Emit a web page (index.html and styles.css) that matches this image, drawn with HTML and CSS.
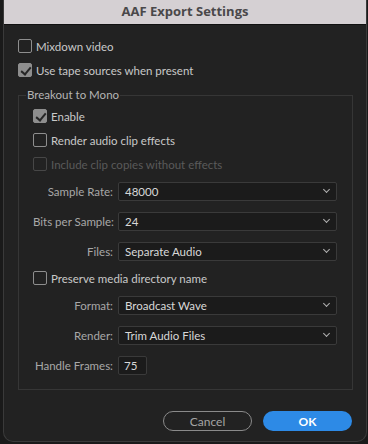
FILE: index.html
```html
<!DOCTYPE html>
<html lang="en">

<head>
    <meta charset="UTF-8">
    <title>AAF Export Settings</title>
    <link rel="stylesheet" href="styles.css">
</head>

<body>
    <div class="window">
        <div class="titlebar">AAF Export Settings</div>

        <div class="content">
            <label class="check"><span class="box"></span>Mixdown video</label>
            <label class="check"><span class="box on"></span>Use tape sources when present</label>

            <fieldset class="group">
                <legend>Breakout to Mono</legend>

                <label class="check"><span class="box on"></span>Enable</label>
                <label class="check"><span class="box"></span>Render audio clip effects</label>
                <label class="check disabled"><span class="box"></span>Include clip copies without effects</label>

                <div class="field">
                    <span class="name">Sample Rate:</span>
                    <div class="select">48000</div>
                </div>
                <div class="field">
                    <span class="name">Bits per Sample:</span>
                    <div class="select">24</div>
                </div>
                <div class="field">
                    <span class="name">Files:</span>
                    <div class="select">Separate Audio</div>
                </div>

                <label class="check"><span class="box"></span>Preserve media directory name</label>

                <div class="field">
                    <span class="name">Format:</span>
                    <div class="select">Broadcast Wave</div>
                </div>
                <div class="field">
                    <span class="name">Render:</span>
                    <div class="select">Trim Audio Files</div>
                </div>
                <div class="field">
                    <span class="name">Handle Frames:</span>
                    <div class="num">75</div>
                </div>
            </fieldset>

            <div class="buttons">
                <button class="btn cancel">Cancel</button>
                <button class="btn ok">OK</button>
            </div>
        </div>
    </div>
</body>

</html>
```

FILE: styles.css
```css
* {
    margin: 0;
    padding: 0;
    box-sizing: border-box;
}

body {
    background-color: #1a1a1a;
    font-family: Lato, "Open Sans", sans-serif;
    font-size: 11.5px;
    color: #c9c9c9;
}

.window {
    width: 364px;
    height: 442px;
    margin-left: 3px;
    background-color: #222;
    border: 1px solid #3a3a3a;
    border-top: none;
    border-radius: 0 0 10px 10px;
    overflow: hidden;
}

.titlebar {
    height: 25px;
    background-color: #d5d0d3;
    border-bottom: 1px solid #111;
    color: #4a484a;
    font-family: "Open Sans", sans-serif;
    font-size: 13px;
    font-weight: bold;
    text-align: center;
    line-height: 22px;
}

.content {
    padding: 9px 13px 0 14px;
}

.check {
    display: flex;
    align-items: center;
    height: 24px;
    gap: 4px;
}

.box {
    width: 14px;
    height: 14px;
    border: 1.5px solid #8e8e8e;
    border-radius: 2px;
    position: relative;
}

.box.on {
    background-color: #8e8e8e;
}

/* check mark */
.box.on::after {
    content: "";
    position: absolute;
    left: 3.5px;
    top: 0.5px;
    width: 4px;
    height: 8px;
    border: solid #262626;
    border-width: 0 2px 2px 0;
    transform: rotate(40deg);
}

.check.disabled {
    color: #5a5a5a;
}

.check.disabled .box {
    border-color: #474747;
}

.group {
    margin-top: 5px;
    border: 1px solid #363636;
    padding: 1px 14px 9px 14px;
}

.group legend {
    margin-left: -7px;
    padding: 0 1px;
    line-height: 16px;
    color: #b5b5b5;
}

.field {
    display: flex;
    align-items: center;
    height: 30px;
    gap: 5px;
}

.name {
    width: 80px;
    text-align: right;
    color: #a8a8a8;
    white-space: nowrap;
}

.select,
.num {
    height: 19px;
    line-height: 17px;
    background-color: #1b1b1b;
    border: 1px solid #3a3a3a;
    border-radius: 2px;
    padding-left: 6px;
    color: #d8d8d8;
}

.select {
    width: 219px;
    position: relative;
}

/* chevron */
.select::after {
    content: "";
    position: absolute;
    right: 7px;
    top: 4px;
    width: 4px;
    height: 4px;
    border: solid #b0b0b0;
    border-width: 0 1.5px 1.5px 0;
    transform: rotate(45deg);
}

.num {
    width: 29px;
    padding-left: 5px;
}

.buttons {
    display: flex;
    justify-content: flex-end;
    gap: 11px;
    margin-top: 21px;
    padding-right: 1px;
}

.btn {
    width: 89px;
    height: 20px;
    border-radius: 10px;
    font-family: Lato, "Open Sans", sans-serif;
    font-size: 12px;
}

.cancel {
    background: transparent;
    border: 1.5px solid #8a8a8a;
    color: #a5a5a5;
}

.ok {
    background-color: #2d8ae6;
    border: none;
    color: #fff;
    font-weight: bold;
}
```
